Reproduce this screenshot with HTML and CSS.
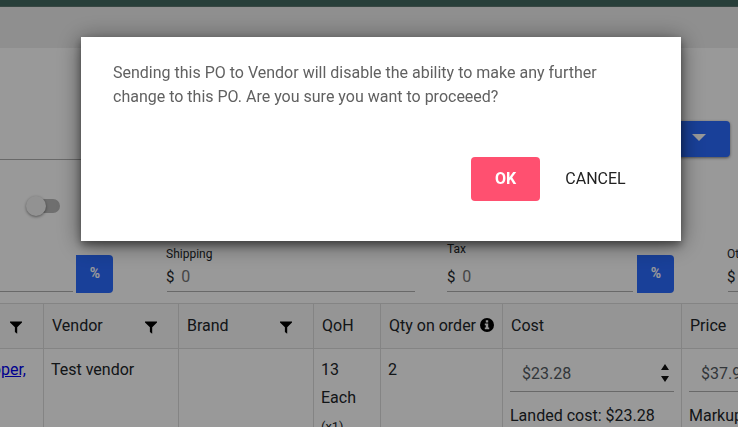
FILE: index.html
```html
<!DOCTYPE html>
<html lang="en">
<head>
  <meta charset="UTF-8">
  <meta name="viewport" content="width=device-width, initial-scale=1.0">
  <title>Purchase Order</title>
  <link rel="stylesheet" href="styles.css">
</head>
<body>
  <svg class="defs">
    <symbol id="filter" viewBox="0 0 12 12"><path d="M0 0H12V1L7.2 5.8V12.3L4.9 10.4V5.8L0 1Z"/></symbol>
  </svg>

  <div class="topbar"></div>
  <div class="toolbar"></div>

  <div class="actions">
    <div class="po-field"></div>
    <button class="menu-button"><svg width="14" height="7" viewBox="0 0 14 7"><path d="M0 0H14L7 7Z"/></svg></button>
  </div>

  <div class="switch-row">
    <div class="switch"><span class="knob"></span></div>
  </div>

  <div class="charges">
    <div class="charge discount">
      <div class="input"></div>
      <button class="percent">%</button>
    </div>
    <div class="charge shipping">
      <div class="input"><label>Shipping</label><div class="amount">$ <span>0</span></div></div>
    </div>
    <div class="charge tax">
      <div class="input"><label>Tax</label><div class="amount">$ <span>0</span></div></div>
      <button class="percent">%</button>
    </div>
    <div class="charge other">
      <div class="input"><label>Other</label><div class="amount">$ <span>0</span></div></div>
    </div>
  </div>

  <div class="grid">
    <div class="th"><svg class="filter"><use href="#filter"/></svg></div>
    <div class="th">Vendor<svg class="filter"><use href="#filter"/></svg></div>
    <div class="th">Brand<svg class="filter"><use href="#filter"/></svg></div>
    <div class="th">QoH</div>
    <div class="th">Qty on order
      <svg class="info" viewBox="0 0 14 14"><circle cx="7" cy="7" r="7"/><path d="M5.8 2.2H8.2V4.5H5.8ZM4.8 5.6H8.2V9.6H9.2V11.2H4.8V9.6H5.8V7.2H4.8Z"/></svg>
    </div>
    <div class="th">Cost</div>
    <div class="th">Price</div>

    <div class="td item"><a href="#">Copper,</a></div>
    <div class="td">Test vendor</div>
    <div class="td"></div>
    <div class="td">13<br>Each<br><small>(x1)</small></div>
    <div class="td">2</div>
    <div class="td money">
      <div class="number">$23.28
        <svg width="8" height="18" viewBox="0 0 8 18"><path d="M4 0L8 6H0ZM0 12H8L4 18Z"/></svg>
      </div>
      <div>Landed cost: $23.28</div>
    </div>
    <div class="td money">
      <div class="number">$37.99</div>
      <div>Markup: 63%</div>
    </div>
  </div>

  <div class="overlay">
    <div class="dialog">
      <p>Sending this PO to Vendor will disable the ability to make any further change to this PO. Are you sure you want to proceeed?</p>
      <div class="dialog-actions">
        <button class="ok">OK</button>
        <button class="cancel">CANCEL</button>
      </div>
    </div>
  </div>
</body>
</html>
```

FILE: styles.css
```css
* {
  box-sizing: border-box;
}

body {
  margin: 0;
  height: 427px;
  overflow: hidden;
  font-family: Roboto, sans-serif;
  font-size: 16px;
  color: #212529;
  background: #fff;
}

button {
  border: none;
  padding: 0;
  font-family: inherit;
}

.defs {
  display: none;
}

.topbar {
  height: 7px;
  background: #446962;
  border-bottom: 1px solid #5e7771;
}

.toolbar {
  height: 41px;
  background: #eee;
}

.actions {
  display: flex;
  justify-content: space-between;
  height: 112px;
  padding-right: 8px;
}

.po-field {
  width: 300px;
  border-bottom: 1px solid #b0b0b0;
}

.menu-button {
  width: 110px;
  height: 36px;
  margin-top: 73px;
  padding: 0 24px 3px 0;
  display: flex;
  align-items: center;
  justify-content: flex-end;
  border-radius: 4px;
  background: #2a6bff;
  box-shadow: 0 1px 3px rgba(0, 0, 0, 0.5);
}

.menu-button svg {
  fill: #fff;
}

.switch-row {
  height: 85px;
  padding: 36px 0 0 26px;
}

.switch {
  position: relative;
  width: 34px;
  height: 20px;
}

.switch::before {
  content: "";
  position: absolute;
  left: 4px;
  top: 3px;
  width: 30px;
  height: 14px;
  border-radius: 7px;
  background: #b9b9b9;
}

.knob {
  position: absolute;
  width: 20px;
  height: 20px;
  border-radius: 50%;
  background: #f4f4f4;
  box-shadow: 0 1px 3px rgba(0, 0, 0, 0.45);
}

.charges {
  display: grid;
  grid-template-columns: 167px 280px 281px 10px;
  height: 58px;
  padding-top: 1px;
}

.charge {
  display: flex;
  gap: 4px;
}

.discount {
  width: 113px;
}

.discount .input {
  margin-right: -1px;
}

.shipping {
  width: 248px;
}

.tax {
  width: 227px;
}

.input {
  flex: 1;
  height: 46px;
  border-bottom: 1px solid #b0b0b0;
}

.input label {
  display: block;
  height: 18px;
  margin-left: -1px;
  font-size: 12px;
  line-height: 17px;
}

.tax label {
  margin: -5px 0 5px;
}

.amount {
  margin-left: -1px;
  font-size: 15px;
  line-height: 25px;
  white-space: nowrap;
}

.tax .amount {
  margin-left: 0;
}

.amount span {
  margin-left: 3px;
  font-size: 16px;
  color: #757575;
}

.percent {
  flex: none;
  width: 37px;
  height: 38px;
  margin-top: 9px;
  padding: 0 0 2px 1px;
  border-radius: 0 4px 4px 0;
  background: #2a6bff;
  color: #fff;
  font-size: 14px;
  font-weight: 700;
}

.grid {
  display: grid;
  grid-template-columns: 44px 135px 135px 67px 122px 179px 56px;
  grid-template-rows: 45px 90px;
  border-top: 1px solid #dcdcdc;
}

.th {
  display: flex;
  align-items: center;
  padding: 0 0 2px 8px;
  border-right: 1px solid #dcdcdc;
  border-bottom: 1px solid #dcdcdc;
  background: #f8f8f8;
}

.filter {
  width: 12px;
  height: 13px;
  margin: 5px 21px 0 auto;
  overflow: visible;
}

.info {
  width: 14px;
  height: 14px;
  margin-left: 4px;
}

.info path {
  fill: #f8f8f8;
}

.td {
  padding: 7px 7px 0;
  line-height: 28px;
  border-right: 1px solid #dcdcdc;
  white-space: nowrap;
}

.th:nth-child(7),
.td:last-child {
  border-right: none;
}

.item {
  display: flex;
  justify-content: flex-end;
  padding: 7px 17px 0 0;
}

.item a {
  color: #0000ee;
}

.td small {
  font-size: 12.8px;
}

.number {
  display: flex;
  align-items: center;
  justify-content: space-between;
  height: 36px;
  margin-bottom: 10px;
  padding: 0 5px 0 12px;
  border-bottom: 1px solid #b0b0b0;
  color: #545b62;
}

.money .number {
  width: 164px;
}

.number svg {
  margin-bottom: 2px;
  fill: #111;
}

.overlay {
  position: fixed;
  inset: 0;
  display: flex;
  align-items: flex-start;
  justify-content: center;
  padding: 37px 0 0 24px;
  background: rgba(0, 0, 0, 0.4);
}

.dialog {
  width: 600px;
  height: 204px;
  padding: 24px 32px;
  background: #fff;
  box-shadow: 0 3px 22px rgba(0, 0, 0, 0.5), 0 4px 8px rgba(0, 0, 0, 0.4);
}

.dialog p {
  margin: 0 0 48px;
  width: 500px;
  line-height: 24px;
  color: #616161;
}

.dialog-actions {
  display: flex;
  justify-content: flex-end;
}

.ok {
  width: 69px;
  height: 44px;
  padding-bottom: 2px;
  border-radius: 4px;
  background: #ff5070;
  color: #fff;
  font-size: 16px;
  font-weight: 700;
}

.cancel {
  width: 109px;
  padding: 0 0 2px 2px;
  background: none;
  color: #212121;
  font-size: 16px;
}
```
